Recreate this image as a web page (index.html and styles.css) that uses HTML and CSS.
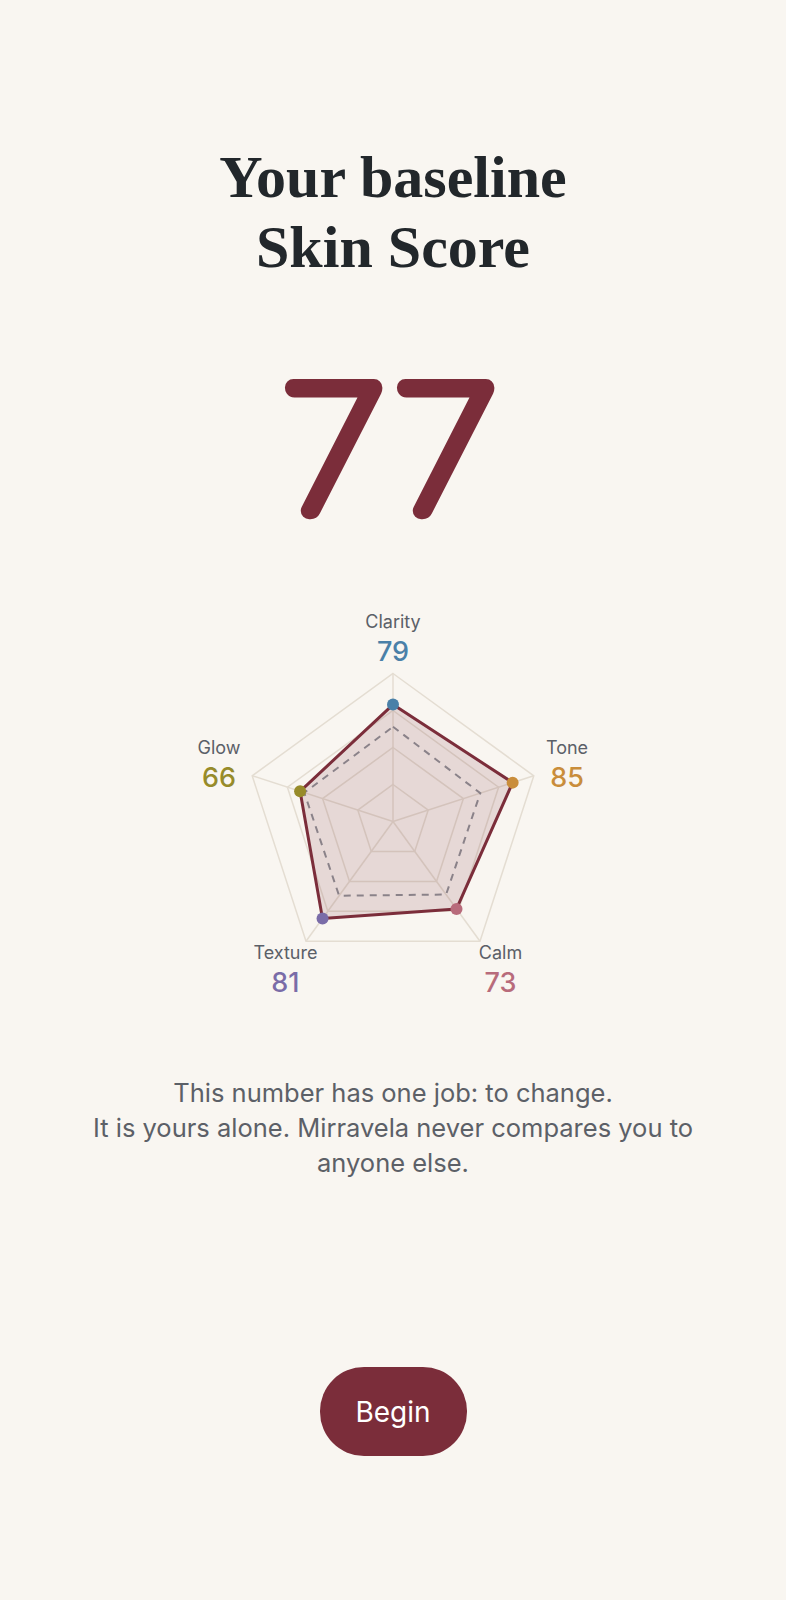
FILE: index.html
```html
<!DOCTYPE html>
<html lang="en">
<head>
    <meta charset="UTF-8">
    <meta name="viewport" content="width=device-width, initial-scale=1.0">
    <title>Skin Score</title>
    <link rel="stylesheet" href="styles.css">
</head>
<body>
    <main class="screen">
        <h1 class="title">Your baseline<br>Skin Score</h1>

        <svg class="score" viewBox="0 0 300 190" width="300" height="190">
            <text x="150" y="151" text-anchor="middle">77</text>
        </svg>

        <svg class="radar" id="radar" viewBox="0 0 420 420" width="420" height="420"></svg>

        <p class="note">This number has one job: to change.<br>It is yours alone. Mirravela never compares you to anyone else.</p>

        <button class="begin-btn">Begin</button>
    </main>

    <script>
        const axes = [
            { name: 'Clarity', value: 79, base: 64, color: '#4a80a8' },
            { name: 'Tone', value: 85, base: 62, color: '#c98d3b' },
            { name: 'Calm', value: 73, base: 61, color: '#b86b7b' },
            { name: 'Texture', value: 81, base: 62, color: '#7a6ca8' },
            { name: 'Glow', value: 66, base: 63, color: '#978b2a' }
        ];

        const svg = document.getElementById('radar');
        const NS = 'http://www.w3.org/2000/svg';
        const cx = 210;
        const cy = 231.5;
        const R = 148;
        const labelR = 183;

        const point = (i, r) => {
            const a = (-90 + i * 72) * Math.PI / 180;
            return [cx + r * Math.cos(a), cy + r * Math.sin(a)];
        };

        const ring = (fn) => axes.map((ax, i) => point(i, fn(ax)).map(n => n.toFixed(1)).join(',')).join(' ');

        const add = (tag, attrs, text) => {
            const el = document.createElementNS(NS, tag);
            Object.entries(attrs).forEach(([k, v]) => el.setAttribute(k, v));
            if (text !== undefined) el.textContent = text;
            svg.appendChild(el);
            return el;
        };

        // Grid rings and spokes
        [0.25, 0.5, 0.75, 1].forEach(f => {
            add('polygon', { points: ring(() => R * f), class: 'grid' });
        });
        axes.forEach((ax, i) => {
            const [x, y] = point(i, R);
            add('line', { x1: cx, y1: cy, x2: x, y2: y, class: 'grid' });
        });

        // Score shape, then the reference outline on top of the fill
        add('polygon', { points: ring(ax => R * ax.value / 100), class: 'area' });
        add('polygon', { points: ring(ax => R * ax.base / 100), class: 'baseline' });
        add('polygon', { points: ring(ax => R * ax.value / 100), class: 'outline' });

        axes.forEach((ax, i) => {
            const [x, y] = point(i, R * ax.value / 100);
            add('circle', { cx: x, cy: y, r: 6, fill: ax.color });

            const [lx, ly] = point(i, labelR);
            add('text', { x: lx, y: ly - 11, class: 'axis-name' }, ax.name);
            add('text', { x: lx, y: ly + 22, class: 'axis-value', fill: ax.color }, ax.value);
        });
    </script>
</body>
</html>
```

FILE: styles.css
```css
body {
    margin: 0;
    min-height: 100vh;
    background: #f9f6f1;
    font-family: Inter, "Noto Sans", sans-serif;
    color: #5c6067;
}

.screen {
    display: flex;
    flex-direction: column;
    align-items: center;
    padding-top: 142px;
}

.title {
    margin: 0;
    font-family: "Liberation Serif", serif;
    font-weight: 700;
    font-size: 60px;
    line-height: 70px;
    color: #22272b;
    text-align: center;
}

.score {
    display: block;
    margin-top: 78px;
    overflow: visible;
}

/* hairline glyphs with a wide round stroke give the soft rounded digits */
.score text {
    font-family: Lato, sans-serif;
    font-size: 176px;
    font-weight: 100;
    fill: #7b2d3a;
    stroke: #7b2d3a;
    stroke-width: 17px;
    stroke-linejoin: round;
    stroke-linecap: round;
    letter-spacing: 10px;
}

.radar {
    display: block;
    margin-top: 40px;
    overflow: visible;
}

.radar .grid {
    fill: none;
    stroke: #e4ddd2;
    stroke-width: 1.5;
}

.radar .area {
    fill: rgba(123, 45, 58, 0.15);
    stroke: none;
}

.radar .baseline {
    fill: none;
    stroke: #8a8289;
    stroke-width: 2;
    stroke-dasharray: 7 6;
}

.radar .outline {
    fill: none;
    stroke: #7b2d3a;
    stroke-width: 3;
    stroke-linejoin: round;
}

.radar .axis-name {
    font-size: 18px;
    fill: #5b6068;
    text-anchor: middle;
}

.radar .axis-value {
    font-size: 27px;
    font-weight: 500;
    text-anchor: middle;
}

.note {
    width: 630px;
    margin: 65px 0 0;
    font-size: 25.5px;
    line-height: 35px;
    text-align: center;
}

.begin-btn {
    width: 147px;
    height: 89px;
    margin-top: 187px;
    padding: 0;
    background: #7b2d3a;
    border: none;
    border-radius: 44px;
    color: #fff;
    font-family: Inter, sans-serif;
    font-size: 28px;
    cursor: pointer;
}
```
